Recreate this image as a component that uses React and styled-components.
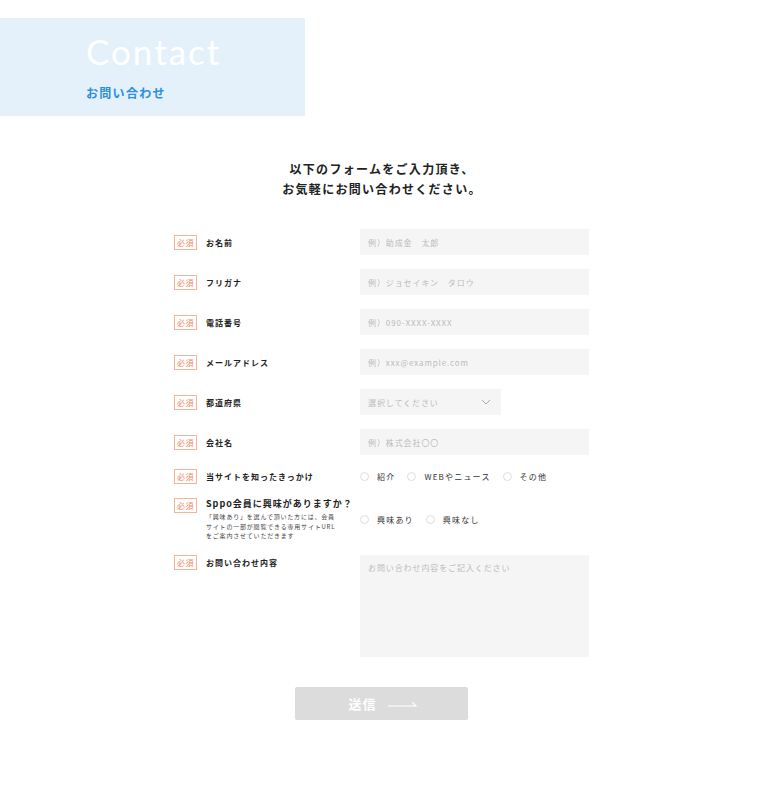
import styled, { createGlobalStyle } from 'styled-components';

const GlobalStyle = createGlobalStyle`
  html, body {
    margin: 0;
    padding: 0;
    background: #ffffff;
  }
  body {
    font-family: 'Noto Sans CJK JP', 'Noto Sans', sans-serif;
    color: #222222;
  }
  * {
    box-sizing: border-box;
  }
`;

const referralOptions = ['紹介', 'WEBやニュース', 'その他'];
const interestOptions = ['興味あり', '興味なし'];

function Radio({label}) {
    return (
        <SCRadio>
            <SCCircle />
            <span>{label}</span>
        </SCRadio>
    );
}

function Label({children, note}) {
    return (
        <SCLabelText>
            <SCLabelTitle $large={!!note}>{children}</SCLabelTitle>
            {note && <SCNote>{note}</SCNote>}
        </SCLabelText>
    );
}

export default function App() {
    return (
        <SCPage>
            <GlobalStyle />
            <SCHero>
                <h1>Contact</h1>
                <p>お問い合わせ</p>
            </SCHero>
            <SCIntro>
                以下のフォームをご入力頂き、<br />
                お気軽にお問い合わせください。
            </SCIntro>
            <SCForm>
                <SCRow>
                    <SCLabelCell><SCBadge>必須</SCBadge><Label>お名前</Label></SCLabelCell>
                    <SCInput placeholder="例）助成金　太郎" />
                </SCRow>
                <SCRow>
                    <SCLabelCell><SCBadge>必須</SCBadge><Label>フリガナ</Label></SCLabelCell>
                    <SCInput placeholder="例）ジョセイキン　タロウ" />
                </SCRow>
                <SCRow>
                    <SCLabelCell><SCBadge>必須</SCBadge><Label>電話番号</Label></SCLabelCell>
                    <SCInput placeholder="例）090-XXXX-XXXX" />
                </SCRow>
                <SCRow>
                    <SCLabelCell><SCBadge>必須</SCBadge><Label>メールアドレス</Label></SCLabelCell>
                    <SCInput placeholder="例）xxx@example.com" />
                </SCRow>
                <SCRow>
                    <SCLabelCell><SCBadge>必須</SCBadge><Label>都道府県</Label></SCLabelCell>
                    <SCSelect>
                        <span>選択してください</span>
                        <svg width="10" height="6" viewBox="0 0 10 6">
                            <path d="M1 1l4 4 4-4" fill="none" stroke="#aaaaaa" strokeWidth="1" />
                        </svg>
                    </SCSelect>
                </SCRow>
                <SCRow>
                    <SCLabelCell><SCBadge>必須</SCBadge><Label>会社名</Label></SCLabelCell>
                    <SCInput placeholder="例）株式会社〇〇" />
                </SCRow>
                <SCRow>
                    <SCLabelCell><SCBadge>必須</SCBadge><Label>当サイトを知ったきっかけ</Label></SCLabelCell>
                    <SCRadios>
                        {referralOptions.map(o => <Radio key={o} label={o} />)}
                    </SCRadios>
                </SCRow>
                <SCRow>
                    <SCLabelCell $top>
                        <SCBadge>必須</SCBadge>
                        <Label note={<>「興味あり」を選んで頂いた方には、会員<br />サイトの一部が閲覧できる専用サイトURL<br />をご案内させていただきます</>}>
                            Sppo会員に興味がありますか？
                        </Label>
                    </SCLabelCell>
                    <SCRadios>
                        {interestOptions.map(o => <Radio key={o} label={o} />)}
                    </SCRadios>
                </SCRow>
                <SCRow $top>
                    <SCLabelCell $top><SCBadge>必須</SCBadge><Label>お問い合わせ内容</Label></SCLabelCell>
                    <SCTextarea placeholder="お問い合わせ内容をご記入ください" />
                </SCRow>
            </SCForm>
            <SCSubmit>
                <span>送信</span>
                <svg width="29" height="6" viewBox="0 0 29 6">
                    <path d="M0 5h28L24.5 1.5" fill="none" stroke="#ffffff" strokeWidth="1.2" />
                </svg>
            </SCSubmit>
        </SCPage>
    );
}

const SCPage = styled.div`
    width: 764px;
    padding: 18px 0 80px;
`;

const SCHero = styled.div`
    width: 305px;
    height: 98px;
    background: #e4f1fb;
    padding: 16px 0 0 86px;
    h1 {
        margin: 0;
        font-family: 'Lato', sans-serif;
        font-weight: 400;
        font-size: 35px;
        line-height: 35px;
        letter-spacing: 2px;
        color: #ffffff;
    }
    p {
        margin: 16px 0 0;
        font-weight: 700;
        font-size: 12px;
        line-height: 16px;
        letter-spacing: 1.3px;
        color: #2b8fdc;
    }
`;

const SCIntro = styled.p`
    margin: 43px 0 0;
    text-align: center;
    font-weight: 700;
    font-size: 12px;
    line-height: 20px;
    letter-spacing: 1.3px;
    color: #222222;
`;

const SCForm = styled.div`
    width: 415px;
    margin: 30px 0 0 174px;
    display: flex;
    flex-direction: column;
    gap: 14px;
`;

const SCRow = styled.div`
    display: grid;
    grid-template-columns: 186px 229px;
    align-items: ${props => props.$top ? 'start' : 'center'};
`;

const SCLabelCell = styled.div`
    display: flex;
    align-items: ${props => props.$top ? 'flex-start' : 'center'};
    gap: 9px;
`;

const SCBadge = styled.span`
    flex: none;
    width: 23px;
    height: 15px;
    border: 1px solid #f7b29a;
    color: #f08660;
    font-size: 8px;
    line-height: 13px;
    text-align: center;
    letter-spacing: 0.5px;
`;

const SCLabelText = styled.div`
    display: flex;
    flex-direction: column;
`;

const SCLabelTitle = styled.span`
    font-weight: 700;
    font-size: ${props => props.$large ? '9px' : '8px'};
    line-height: ${props => props.$large ? '12px' : '15px'};
    letter-spacing: 1px;
    color: #222222;
`;

const SCNote = styled.span`
    margin-top: 2px;
    font-size: 6px;
    line-height: 9.5px;
    letter-spacing: 0.8px;
    color: #444444;
`;

const fieldBase = `
    width: 229px;
    border: none;
    outline: none;
    background: #f5f5f5;
    font-family: 'Noto Sans CJK JP', 'Noto Sans', sans-serif;
    font-size: 8px;
    letter-spacing: 0.9px;
    color: #333333;
    &::placeholder {
        color: #bbbbbb;
    }
`;

const SCInput = styled.input`
    ${fieldBase}
    height: 26px;
    padding: 0 8px;
`;

const SCTextarea = styled.textarea`
    ${fieldBase}
    height: 102px;
    padding: 7px 8px;
    resize: none;
    line-height: 12px;
    display: block;
`;

const SCSelect = styled.div`
    width: 141px;
    height: 26px;
    background: #f5f5f5;
    display: flex;
    align-items: center;
    justify-content: space-between;
    padding: 0 10px 0 8px;
    font-size: 8px;
    letter-spacing: 0.9px;
    color: #bbbbbb;
`;

const SCRadios = styled.div`
    display: flex;
    align-items: center;
    gap: 12px;
    height: 15px;
`;

const SCRadio = styled.label`
    display: flex;
    align-items: center;
    gap: 8px;
    font-size: 8px;
    letter-spacing: 1.2px;
    color: #333333;
`;

const SCCircle = styled.span`
    width: 9px;
    height: 9px;
    border: 1px solid #dddddd;
    border-radius: 50%;
    background: #ffffff;
`;

const SCSubmit = styled.button`
    display: flex;
    align-items: center;
    justify-content: center;
    gap: 11px;
    width: 173px;
    height: 33px;
    margin: 30px 0 0 295px;
    background: #dcdcdc;
    border: none;
    border-radius: 2px;
    font-family: 'Noto Sans CJK JP', 'Noto Sans', sans-serif;
    font-weight: 700;
    font-size: 13px;
    letter-spacing: 1px;
    color: #ffffff;
    padding: 0 0 0 2px;
    svg {
        margin-top: 1px;
    }
`;
